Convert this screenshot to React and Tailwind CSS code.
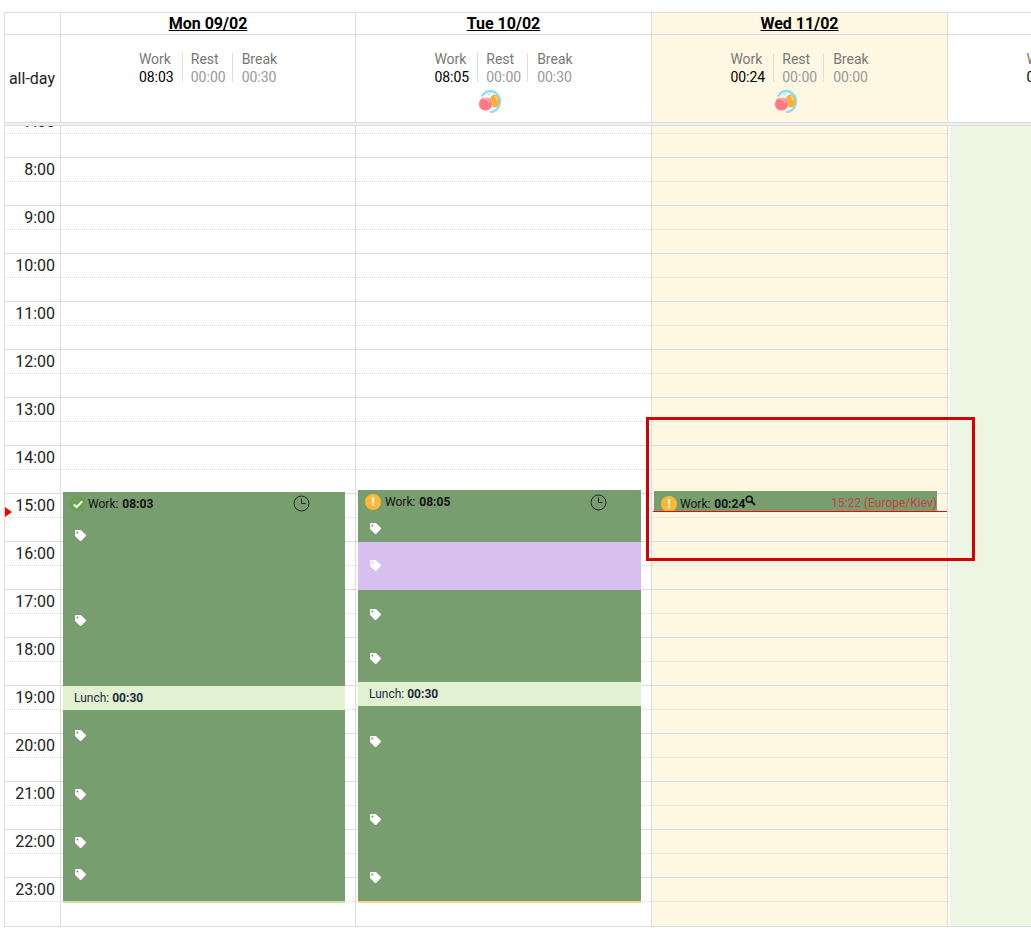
import React from "react";
import { FaTag } from "react-icons/fa";

const hours = ["7:00", "8:00", "9:00", "10:00", "11:00", "12:00", "13:00", "14:00", "15:00", "16:00", "17:00", "18:00", "19:00", "20:00", "21:00", "22:00", "23:00"];

const days = [
  { title: "Mon 09/02", work: "08:03", rest: "00:00", pause: "00:30", balloon: false, width: "w-[295px]" },
  { title: "Tue 10/02", work: "08:05", rest: "00:00", pause: "00:30", balloon: true, width: "w-[296px]" },
  { title: "Wed 11/02", work: "00:24", rest: "00:00", pause: "00:00", balloon: true, width: "w-[296px]", today: true },
  { title: "Thu 12/02", work: "00:00", rest: "00:00", pause: "00:00", balloon: false, width: "w-[296px]" },
];

function Balloons() {
  return (
    <svg width="23" height="23" viewBox="0 0 23 23">
      <path d="M4 6.5C6 2.5 9.5 1 12 1c5.5 0 10 4.5 10 10.5 0 6-4.5 10.5-10 10.5" fill="none" stroke="#8fdcf7" strokeWidth="2.4" />
      <circle cx="11" cy="4" r="2" fill="#c4eefc" />
      <ellipse cx="16.5" cy="11" rx="5" ry="6.5" fill="#fbb034" />
      <path d="M17 6.5c1.6.8 2.4 2.4 2 4" fill="none" stroke="#fde3a8" strokeWidth="1.2" />
      <circle cx="7.5" cy="14" r="7.2" fill="#fff" fillOpacity="0.7" />
      <circle cx="7.5" cy="14" r="6.6" fill="#ff7b83" />
      <path d="M5.5 8.8c2.8-.6 5.4 1 6 4" fill="none" stroke="#ffc4c8" strokeWidth="1.2" />
    </svg>
  );
}

function CheckBadge() {
  return (
    <span className="w-4 h-4 rounded-full bg-[#6f9f52] flex items-center justify-center shrink-0">
      <svg width="12" height="12" viewBox="0 0 12 12">
        <path d="M1.8 6.4l2.8 2.6 5.6-5.6" fill="none" stroke="#fff" strokeWidth="2" />
      </svg>
    </span>
  );
}

function WarnBadge() {
  return (
    <span className="w-4 h-4 rounded-full bg-[#fbb934] flex items-center justify-center shrink-0 text-white text-[12px] leading-none font-bold">
      !
    </span>
  );
}

function ClockIcon({ className }) {
  return (
    <svg className={className} width="17" height="17" viewBox="0 0 17 17">
      <circle cx="8.5" cy="8.5" r="7.5" fill="none" stroke="#222" strokeWidth="1" />
      <path d="M8.5 3.5v5h4" fill="none" stroke="#222" strokeWidth="1" />
    </svg>
  );
}

function Tag({ top }) {
  return <FaTag size={11} color="#fff" className="absolute left-[12px]" style={{ top: top + 1 }} />;
}

function Lunch() {
  return (
    <div className="h-6 bg-[#e1f1d1] pl-[11px] pb-[1px] flex items-center text-[12px] text-[#1e2b3a]">
      Lunch:&nbsp;<b>00:30</b>
    </div>
  );
}

function Stat({ label, value, className, dark }) {
  return (
    <div className={`h-[29px] flex flex-col justify-center ${className}`}>
      <div className="text-[14px] leading-[18px] text-[#777]">{label}</div>
      <div className={`text-[14px] leading-[18px] ${dark ? "text-black" : "text-[#999]"}`}>{value}</div>
    </div>
  );
}

export default function App() {
  return (
    <div className="relative w-[1031px] h-[946px] overflow-hidden bg-white pt-3 pl-1 [font-family:Roboto,sans-serif] text-[#222]">
      {/* header rows */}
      <div className="flex w-[1239px] border-t border-[#ddd] h-[22px]">
        <div className="w-14 shrink-0 border-l border-[#ddd]" />
        {days.map((d) => (
          <div key={d.title} className={`${d.width} shrink-0 border-l border-[#ddd] text-center text-[16px] leading-[21px] font-bold text-black underline ${d.today ? "bg-[#fef8e3]" : ""}`}>
            {d.title}
          </div>
        ))}
      </div>
      <div className="flex w-[1239px] border-t border-[#ddd] h-[88px]">
        <div className="w-14 shrink-0 border-l border-[#ddd] flex items-center justify-end pr-[5px] text-[16px] pt-[1px] whitespace-nowrap">all-day</div>
        {days.map((d) => (
          <div key={d.title} className={`${d.width} shrink-0 border-l border-[#ddd] pt-[18px] ${d.today ? "bg-[#fef8e3]" : ""}`}>
            <div className="flex justify-center">
              <Stat label="Work" value={d.work} dark className="px-2" />
              <Stat label="Rest" value={d.rest} className="pl-2 pr-[6px] border-l border-[#ddd]" />
              <Stat label="Break" value={d.pause} className="pl-[9px] pr-2 border-l border-[#ddd]" />
            </div>
            {d.balloon && (
              <div className="flex justify-center pr-[29px] mt-[8px]">
                <Balloons />
              </div>
            )}
          </div>
        ))}
      </div>
      <div className="h-1 w-[1239px] bg-[#efefef] border-y border-[#ddd]" />

      {/* time grid */}
      <div className="relative h-[801px] w-[1239px] border-b border-[#ddd] overflow-hidden">
        <div className="absolute inset-0 flex">
          <div className="w-14 shrink-0 border-l border-[#ddd]" />
          {days.map((d) => (
            <div key={d.title} className={`${d.width} shrink-0 border-l border-[#ddd] ${d.today ? "bg-[#fef8e3]" : ""}`} />
          ))}
        </div>

        <div className="relative -mt-[17px]">
          {hours.map((h) => (
            <div key={h} className="h-12">
              <div className="h-6 border-t border-[#ddd]">
                <span className="block w-14 text-right pr-[5px] text-[16px] leading-[24px]">{h}</span>
              </div>
              <div className="h-6 border-t border-dotted border-[#d8d8d8]" />
            </div>
          ))}
        </div>

        <svg className="absolute left-[1px] top-[381px]" width="7" height="10" viewBox="0 0 7 10">
          <polygon points="0,0 7,5 0,10" fill="#f00" />
        </svg>

        <div className="absolute inset-y-0 left-14 right-0 flex">
          {/* Monday */}
          <div className="relative w-[295px] shrink-0">
            <div className="absolute left-[3px] top-[366px] w-[282px] border-b-2 border-[#c5e0a8]">
              <div className="relative h-[194px] bg-[#789e6f]">
                <div className="flex items-center gap-[2px] pl-[7px] pt-[3px] text-[12px] text-[#111]">
                  <CheckBadge />
                  <span>Work: <b className="ml-px">08:03</b></span>
                </div>
                <ClockIcon className="absolute left-[230px] top-[3px]" />
                <Tag top={37} />
                <Tag top={122} />
              </div>
              <Lunch />
              <div className="relative h-[191px] bg-[#789e6f]">
                <Tag top={19} />
                <Tag top={78} />
                <Tag top={126} />
                <Tag top={158} />
              </div>
            </div>
          </div>

          {/* Tuesday */}
          <div className="relative w-[296px] shrink-0">
            <div className="absolute left-[3px] top-[364px] w-[283px] border-b-2 border-[#fad58a]">
              <div className="relative h-[52px] bg-[#789e6f]">
                <div className="flex items-center gap-[4px] pl-[7px] pt-[3px] text-[12px] text-[#111]">
                  <WarnBadge />
                  <span>Work: <b className="ml-px">08:05</b></span>
                </div>
                <ClockIcon className="absolute left-[232px] top-[4px]" />
                <Tag top={32} />
              </div>
              <div className="relative h-12 bg-[#d7bff0]">
                <Tag top={17} />
              </div>
              <div className="relative h-[92px] bg-[#789e6f]">
                <Tag top={18} />
                <Tag top={62} />
              </div>
              <Lunch />
              <div className="relative h-[195px] bg-[#789e6f]">
                <Tag top={29} />
                <Tag top={107} />
                <Tag top={165} />
              </div>
            </div>
          </div>

          {/* Wednesday */}
          <div className="relative w-[296px] shrink-0">
            <div className="absolute left-[3px] top-[365px] w-[283px] h-5 bg-[#789e6f] flex items-start pl-[7px] pt-[5px] text-[12px] text-[#111]">
              <WarnBadge />
              <span className="ml-[3px] mt-[1px] leading-[15px]">Work: <b className="ml-px">00:24</b></span>
              <svg className="-mt-[1px]" width="11" height="11" viewBox="0 0 11 11">
                <circle cx="4.2" cy="4.2" r="3" fill="none" stroke="#111" strokeWidth="1.5" />
                <path d="M6.5 6.5l3.5 3.5" stroke="#111" strokeWidth="2" />
              </svg>
              <span className="ml-auto leading-[15px] text-[#c9403d]">15:22 (Europe/Kiev)</span>
            </div>
            <div className="absolute left-[2px] top-[385px] w-[294px] h-px bg-[#f00]" />
          </div>

          {/* Thursday */}
          <div className="relative w-[296px] shrink-0">
            <div className="absolute left-[3px] inset-y-0 right-0 bg-[#edf5e3]" />
          </div>
        </div>
      </div>

      {/* annotation box */}
      <div className="absolute left-[646px] top-[417px] w-[329px] h-[144px] border-[3px] border-[#d70000]" />
    </div>
  );
}
